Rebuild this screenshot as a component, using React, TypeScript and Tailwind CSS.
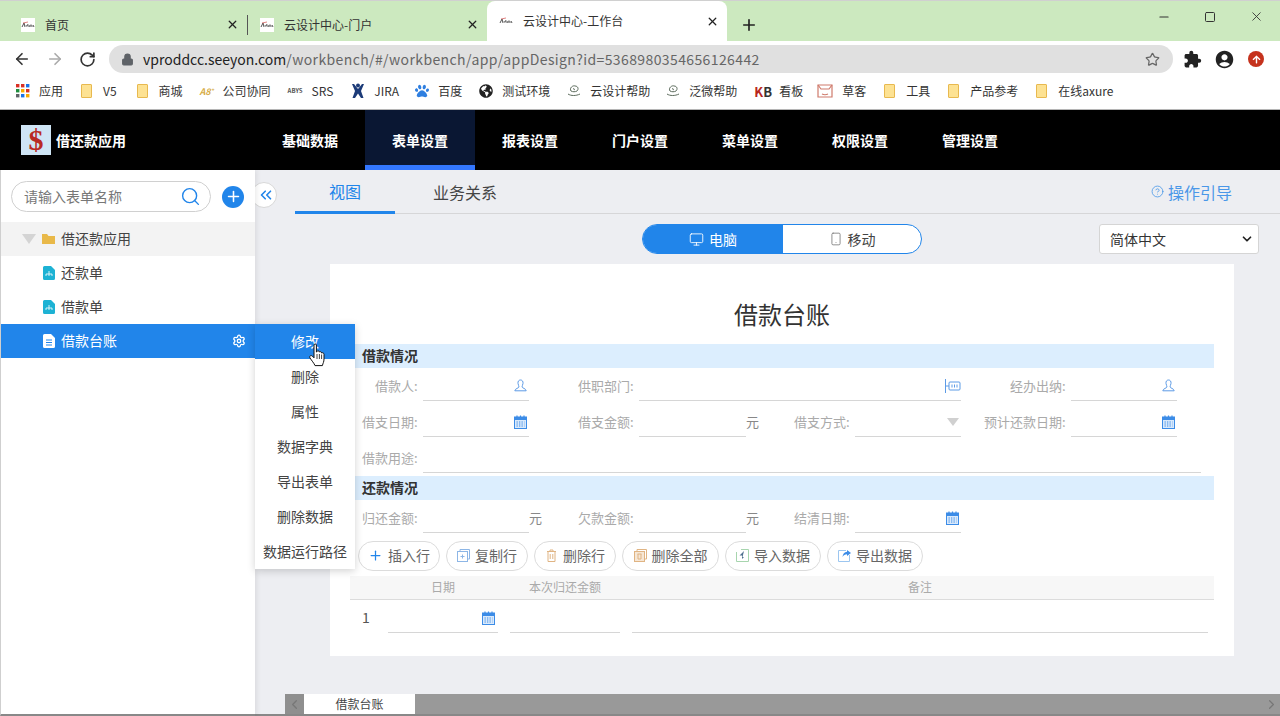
import React from 'react';
import { ArrowLeft, ArrowRight, RotateCw, X, Plus, Minus, Square, Star, Lock, Search, Monitor, Smartphone, Settings, ChevronsLeft, ChevronDown, ChevronLeft, ChevronRight, CircleHelp } from 'lucide-react';
import { FaGlobeAmericas, FaPaw, FaArrowUp } from 'react-icons/fa';
import { MdAccountCircle, MdExtension } from 'react-icons/md';

const FONT = "font-['Noto_Sans_CJK_SC','Noto_Sans',sans-serif]";

const Favicon = () => (
  <svg width="14" height="14" viewBox="0 0 14 14" className="bg-white shrink-0">
    <path d="M1 9 L3 5 L4 9 M5 7 C6 9 6 9 7 6 M8 7 L8 9 M9 9 C9 6 11 6 11 9 M12 7 L13 9" fill="none" stroke="#555" strokeWidth="1" />
    <path d="M2 5 L7 4" stroke="#c33" strokeWidth="0.6" />
  </svg>
);

const Folder = () => (
  <span className="w-[13px] flex shrink-0">
    <span className="w-[11px] h-[14px] bg-[#fde293] border border-[#e8b94f] rounded-[1px]" />
  </span>
);

const AppsGrid = () => (
  <svg width="14" height="14" viewBox="0 0 14 14" className="shrink-0">
    {[
      ['#d93025', 0, 0], ['#d93025', 5, 0], ['#1a73e8', 10, 0],
      ['#1e8e3e', 0, 5], ['#f9ab00', 5, 5], ['#d93025', 10, 5],
      ['#5f6368', 0, 10], ['#1a73e8', 5, 10], ['#f9ab00', 10, 10],
    ].map(([c, x, y], i) => (
      <rect key={i} x={x as number} y={y as number} width="3.4" height="3.4" fill={c as string} />
    ))}
  </svg>
);

const CloudMark = () => (
  <svg width="14" height="14" viewBox="0 0 14 14" fill="none" stroke="#5c6b5c" strokeWidth="1" className="shrink-0">
    <path d="M4 7 C2 4 6 1 8 2 C11 2 12 5 10 7 C8 8 6 8 4 7 Z" />
    <path d="M7 4 C6 5 7 6 8 5.5" />
    <path d="M1 10 C4 12 9 12 13 10" />
  </svg>
);

const JiraMark = () => (
  <svg width="14" height="16" viewBox="0 0 14 16" className="shrink-0">
    <circle cx="7" cy="2.4" r="2" fill="#1c3b78" />
    <path d="M1 1 L3 1 L7 6 L11 1 L13 1 L10 8 L12.5 15 L10 15 L7 10.5 L4 15 L1.5 15 L4 8 Z" fill="#1c3b78" />
  </svg>
);

const MailMark = () => (
  <svg width="16" height="14" viewBox="0 0 16 14" fill="none" stroke="#cf7b6c" strokeWidth="1.2" className="shrink-0">
    <path d="M1 1 H15 V13 H1 Z" />
    <path d="M1 1 L4 5 H12 L15 1" />
    <path d="M5 10 C7 11 9 11 11 10" />
  </svg>
);

const bookmarks: { icon: React.ReactNode; label: string; ml?: string }[] = [
  { icon: <AppsGrid />, label: '应用' },
  { icon: <Folder />, label: 'V5' },
  { icon: <Folder />, label: '商城', ml: 'ml-[2px]' },
  { icon: <span className="w-[14px] text-[9px] leading-none italic font-bold text-[#d6ac45] shrink-0">A8⁺</span>, label: '公司协同', ml: '-ml-[1px]' },
  { icon: <span className="w-[15px] text-[6px] leading-none font-bold text-[#555] shrink-0">ABYS</span>, label: 'SRS', ml: '-ml-[1px]' },
  { icon: <JiraMark />, label: 'JIRA' },
  { icon: <FaPaw className="w-[14px] h-[14px] text-[#2f7fe0] shrink-0" />, label: '百度', ml: '-ml-[2px]' },
  { icon: <FaGlobeAmericas className="w-[14px] h-[14px] text-[#222] shrink-0" />, label: '测试环境', ml: '-ml-[1px]' },
  { icon: <CloudMark />, label: '云设计帮助', ml: '-ml-[1px]' },
  { icon: <CloudMark />, label: '泛微帮助', ml: '-ml-[2px]' },
  { icon: <span className="w-[16px] text-[13px] leading-none font-bold shrink-0 text-[#b8261c]">K<span className="text-[#333]">B</span></span>, label: '看板', ml: '-ml-[1px]' },
  { icon: <MailMark />, label: '草客', ml: '-ml-[4px]' },
  { icon: <Folder />, label: '工具' },
  { icon: <Folder />, label: '产品参考' },
  { icon: <Folder />, label: '在线axure' },
];

const navItems = ['基础数据', '表单设置', '报表设置', '门户设置', '菜单设置', '权限设置', '管理设置'];
const menuItems = ['修改', '删除', '属性', '数据字典', '导出表单', '删除数据', '数据运行路径'];

const BrowserTab = ({ title, active, width }: { title: string; active?: boolean; width: string }) => (
  <div className={`h-full flex items-center pr-[8px] ${width} ${active ? 'pl-[12px] bg-white rounded-t-[8px]' : 'pl-[13px]'}`}>
    <Favicon />
    <span className="ml-[10px] text-[12px] text-[#333] flex-1">{title}</span>
    <X size={13} strokeWidth={2.4} className="text-[#222]" />
  </div>
);

const FileIcon = ({ lines }: { lines?: boolean }) => (
  <svg width="12" height="14" viewBox="0 0 12 14" className="shrink-0">
    <path d="M1.5 0 H8 L12 4 V12.5 A1.5 1.5 0 0 1 10.5 14 H1.5 A1.5 1.5 0 0 1 0 12.5 V1.5 A1.5 1.5 0 0 1 1.5 0 Z" fill={lines ? '#ffffff' : '#1db2d4'} />
    {lines ? (
      <path d="M3 6 H9 M3 8.5 H9 M3 11 H9" stroke="#2185ea" strokeWidth="1" />
    ) : (
      <path d="M6 5 V8 M3 8 H9 M3 8 V10 M6 8 V10 M9 8 V10" stroke="#ffffff" strokeWidth="0.8" fill="none" />
    )}
  </svg>
);

const Calendar = () => (
  <svg width="13" height="14" viewBox="0 0 13 14" className="shrink-0">
    <rect x="0.5" y="2" width="12" height="11.5" fill="#d9e9fb" stroke="#3c8ce7" />
    <rect x="0" y="2" width="13" height="3" fill="#3c8ce7" />
    <path d="M3 0.5 V3 M6.5 0.5 V3 M10 0.5 V3" stroke="#3c8ce7" strokeWidth="1.2" />
    <path d="M2.5 7 H10.5 M2.5 9 H10.5 M2.5 11 H10.5" stroke="#3c8ce7" strokeWidth="1" strokeDasharray="1.3 1.2" />
  </svg>
);

const UserIcon = () => (
  <svg width="13" height="13" viewBox="0 0 13 13" fill="none" stroke="#5d9be6" strokeWidth="1" className="shrink-0">
    <path d="M6.5 1 C4.5 1 3.8 2.6 4 4.4 C4.2 6 5 7 5 8 C5 9 1 9.5 0.8 11.8 H12.2 C12 9.5 8 9 8 8 C8 7 8.8 6 9 4.4 C9.2 2.6 8.5 1 6.5 1 Z" />
  </svg>
);

const OrgIcon = () => (
  <svg width="16" height="14" viewBox="0 0 16 14" fill="none" stroke="#5d9be6" strokeWidth="1" className="shrink-0">
    <path d="M0.5 0 V14 M0.5 7 H4" />
    <rect x="4" y="3" width="11" height="8" rx="1" />
    <path d="M7 5.5 V8.5 M9.5 5.5 V8.5 M12 5.5 V8.5" />
  </svg>
);

const Field = ({ icon, span, className = '' }: { icon?: React.ReactNode; span?: string; className?: string }) => (
  <div className={`h-[30px] border-b border-[#d6d6d6] flex items-center justify-end ${span ?? ''} ${className}`}>{icon}</div>
);

const Label = ({ text, unit }: { text?: string; unit?: boolean }) => (
  <div className="h-[30px] flex items-center text-[13px] text-[#aaaaaa] pr-[7px]">
    {unit && <span className="text-[#888]">元</span>}
    {text && (
      <span className="ml-auto">
        {text}
        <span className="inline-block w-[2px]">:</span>
      </span>
    )}
  </div>
);

const Band = ({ text }: { text: string }) => (
  <div className="h-[24px] bg-[#dceefe] pl-[12px] pb-px flex items-center text-[14px] font-bold text-[#333]">{text}</div>
);

const toolButtons: { label: string; icon: React.ReactNode; w: string }[] = [
  { label: '插入行', w: 'w-[82px]', icon: <Plus size={15} className="text-[#2185ea]" /> },
  {
    label: '复制行', w: 'w-[82px]',
    icon: (
      <svg width="13" height="13" viewBox="0 0 13 13" fill="none" stroke="#8db6e6">
        <path d="M3 2.5 V0.5 H12.5 V10 H10.5" /><rect x="0.5" y="2.5" width="10" height="10" />
        <path d="M3.5 7.5 H7.5 M5.5 5.5 V9.5" />
      </svg>
    ),
  },
  {
    label: '删除行', w: 'w-[82px]',
    icon: (
      <svg width="13" height="13" viewBox="0 0 13 13" fill="none" stroke="#e0b483">
        <path d="M2 2.5 H11 M5 2.5 V1 H8 V2.5 M3 2.5 V12.5 H10 V2.5 M5.2 5 V10 M7.8 5 V10" />
      </svg>
    ),
  },
  {
    label: '删除全部', w: 'w-[97px]',
    icon: (
      <svg width="13" height="13" viewBox="0 0 13 13" fill="none" stroke="#e0b483">
        <path d="M3 2.5 V0.5 H12.5 V10 H10.5" /><rect x="0.5" y="2.5" width="10" height="10" fill="#f6e7d6" />
        <path d="M3.5 5 H7.5 M4 5 V10 H7 V5" />
      </svg>
    ),
  },
  {
    label: '导入数据', w: 'w-[96px]',
    icon: (
      <svg width="13" height="13" viewBox="0 0 13 13" fill="none">
        <path d="M5 0.5 H12.5 V12.5 H0.5 V3" stroke="#a7d5ae" />
        <path d="M8 2 L3.5 6.5 H6 V10 L8 8 H10 H6.5 Z" fill="#4e6f8f" />
      </svg>
    ),
  },
  {
    label: '导出数据', w: 'w-[96px]',
    icon: (
      <svg width="13" height="13" viewBox="0 0 13 13" fill="none">
        <path d="M8 1.5 H0.5 V12.5 H11.5 V6" stroke="#9cc6f0" />
        <path d="M9 1 L13 4 L9 7 V5.2 C7 5.2 5.5 6 4.5 8 C4.7 5 6.5 3 9 2.8 Z" fill="#3c8ce7" />
      </svg>
    ),
  },
];

const HandCursor = () => (
  <svg width="18" height="24" viewBox="0 0 18 24" className="absolute left-[308px] top-[343px] z-30">
    <path
      d="M6 2 C6 0.6 8.4 0.6 8.4 2 V9 L9 8.6 C9.4 7.4 11.2 7.6 11.4 9 C12 8.2 13.4 8.6 13.6 10 C14.4 9.4 16 9.8 16 11.4 V16 C16 19 15 20 14.4 22.6 H7 C6 20 3.6 17.6 2 15 C1 13 3 11.8 4.4 13.2 L6 14.8 Z"
      fill="#ffffff"
      stroke="#111111"
      strokeWidth="1"
    />
    <path d="M9 11 V16 M11.4 11 V16 M13.6 11.5 V16" stroke="#111111" strokeWidth="0.8" />
  </svg>
);

export default function App() {
  return (
    <div className={`w-[1280px] h-[716px] overflow-hidden relative flex flex-col bg-white ${FONT}`}>
      {/* browser chrome */}
      <div className="h-[41px] shrink-0 bg-[#cce9bf] border-t border-[#d0d0d0] flex items-end">
        <div className="h-[33px] pl-[8px] flex items-center">
          <BrowserTab title="首页" width="w-[239px]" />
          <div className="w-px h-[20px] bg-[#555]" />
        </div>
        <div className="h-[33px] flex items-center -ml-px">
          <BrowserTab title="云设计中心-门户" width="w-[240px]" />
        </div>
        <BrowserTab title="云设计中心-工作台" width="w-[240px]" active />
        <div className="h-[33px] flex items-center ml-[13px]">
          <Plus size={18} strokeWidth={2.2} className="text-[#222]" />
        </div>
        <div className="ml-auto self-start flex items-center gap-[33px] pr-[16px] pt-[8px] text-[#333]">
          <Minus size={14} />
          <Square size={12} />
          <X size={15} strokeWidth={1.4} />
        </div>
      </div>
      <div className="h-[36px] shrink-0 bg-white flex items-center">
        <div className="w-[109px] flex items-center pl-[13px] gap-[15px]">
          <ArrowLeft size={18} strokeWidth={2.2} className="text-[#333]" />
          <ArrowRight size={18} strokeWidth={2.2} className="text-[#aaaaaa]" />
          <RotateCw size={17} strokeWidth={2.4} className="text-[#333]" />
        </div>
        <div className="w-[1064px] h-[28px] rounded-full bg-[#e0e0e0] flex items-center pl-[12px] pr-[13px]">
          <Lock size={13} fill="#5f6368" className="text-[#5f6368]" />
          <span className="ml-[9px] text-[14px] text-[#666]">
            <span className="text-[#222]">vproddcc.seeyon.com</span>
            <span className="tracking-[0.39px]">/workbench/#/workbench/app/appDesign?id=5368980354656126442</span>
          </span>
          <Star size={15} className="ml-auto text-[#666]" />
        </div>
        <div className="flex-1 flex items-center pl-[10px] gap-[12px]">
          <MdExtension className="w-[19px] h-[19px] text-[#222]" />
          <MdAccountCircle className="w-[21px] h-[21px] text-[#222]" />
          <span className="w-[16px] h-[16px] ml-[1px] rounded-full bg-[#c5321d] flex items-center justify-center">
            <FaArrowUp className="w-[9px] h-[9px] text-white" />
          </span>
        </div>
      </div>
      <div className="h-[33px] shrink-0 bg-white border-b border-[#b5b5b5] flex items-center pl-[16px] pb-[4px] gap-[18px]">
        {bookmarks.map((b, i) => (
          <div key={i} className={`flex items-center gap-[9px] text-[12px] text-[#333] ${b.ml ?? ''}`}>
            {b.icon}
            <span>{b.label}</span>
          </div>
        ))}
      </div>

      {/* app header */}
      <div className="h-[60px] shrink-0 bg-black flex text-white">
        <div className="w-[255px] flex items-center pl-[21px]">
          <div className="w-[30px] h-[30px] bg-[#cfe5f5] flex items-center justify-center text-[30px] leading-none font-bold text-[#b92a24] font-['Liberation_Serif',serif]">$</div>
          <span className="ml-[5px] text-[14px] font-bold">借还款应用</span>
        </div>
        {navItems.map((n, i) => (
          <div key={n} className={`w-[110px] flex items-center justify-center text-[14px] font-bold ${i === 1 ? 'bg-[#0a1733] border-b-[5px] border-[#3377ff] pt-[5px]' : ''}`}>
            {n}
          </div>
        ))}
      </div>

      <div className="flex-1 flex min-h-0">
        {/* sidebar */}
        <div className="w-[255px] shrink-0 bg-white border-l border-b-2 border-l-[#cfcfcf] border-b-[#888] shadow-[2px_0_5px_rgba(0,0,0,0.08)] z-10">
          <div className="flex items-center pl-[10px] pt-[11px]">
            <div className="w-[200px] h-[31px] rounded-full border border-[#d0d0d0] flex items-center pl-[12px] pr-[9px] text-[14px] text-[#777]">
              <span className="flex-1">请输入表单名称</span>
              <Search size={21} strokeWidth={1.6} className="text-[#2185ea]" />
            </div>
            <div className="ml-[11px] w-[22px] h-[22px] rounded-full bg-[#2185ea] flex items-center justify-center">
              <Plus size={17} strokeWidth={2.2} className="text-white" />
            </div>
          </div>
          <div className="mt-[10px] text-[14px] text-[#444]">
            <div className="h-[34px] bg-[#f3f3f3] flex items-center pl-[21px] pb-px">
              <span className="w-0 h-0 border-l-[7px] border-r-[7px] border-t-[10px] border-l-transparent border-r-transparent border-t-[#d4d4d4]" />
              <svg width="13" height="11" viewBox="0 0 13 11" className="ml-[6px]">
                <path d="M0 1 H5 L6.5 3 H13 V11 H0 Z" fill="#e9b949" />
              </svg>
              <span className="ml-[6px]">借还款应用</span>
            </div>
            {['还款单', '借款单'].map(t => (
              <div key={t} className="h-[34px] flex items-center pl-[42px] pb-px">
                <FileIcon />
                <span className="ml-[6px]">{t}</span>
              </div>
            ))}
            <div className="h-[34px] bg-[#2185ea] text-white flex items-center pl-[42px] pr-[9px] pb-px">
              <FileIcon lines />
              <span className="ml-[6px] flex-1">借款台账</span>
              <Settings size={14} strokeWidth={2.2} />
            </div>
          </div>
        </div>

        {/* main */}
        <div className="flex-1 bg-[#edeef2] flex flex-col min-w-0">
          <div className="h-[44px] shrink-0 ml-[40px] border-b border-[#d6d6d8] flex text-[#444] text-[16px]">
            <div className="w-[100px] h-[44px] border-b-[3px] border-[#2185ea] text-[#2185ea] flex items-center justify-center">视图</div>
            <div className="w-[140px] h-[43px] flex items-center justify-center">业务关系</div>
            <div className="ml-auto h-[43px] flex items-center pr-[48px] text-[#4a97e8]">
              <CircleHelp size={13} strokeWidth={1.5} className="mr-[4px]" />
              操作引导
            </div>
          </div>
          <div className="h-[50px] shrink-0 flex items-start pt-[10px] pl-[387px]">
            <div className="w-[280px] h-[30px] rounded-full border border-[#2185ea] bg-white flex overflow-hidden text-[14px]">
              <div className="w-[140px] bg-[#2185ea] text-white flex items-center justify-center gap-[5px]">
                <Monitor size={15} strokeWidth={1.4} />
                电脑
              </div>
              <div className="flex-1 text-[#444] flex items-center justify-center gap-[5px]">
                <Smartphone size={14} strokeWidth={1.4} className="text-[#777]" />
                移动
              </div>
            </div>
            <div className="ml-[177px] w-[160px] h-[30px] bg-white border border-[#d5d5d5] rounded-[3px] flex items-center justify-between pl-[10px] pr-[4px] text-[14px] text-[#333]">
              简体中文
              <ChevronDown size={14} strokeWidth={3} className="text-[#222]" />
            </div>
          </div>

          {/* form sheet */}
          <div className="ml-[75px] w-[904px] h-[392px] shrink-0 bg-white px-[20px]">
            <div className="h-[80px] flex items-center justify-center pt-[20px] text-[24px] text-[#333]">借款台账</div>
            <Band text="借款情况" />
            <div className="grid grid-cols-[73px_106px_110px_107px_109px_106px_110px_106px_37px] items-end grid-rows-[33px_36px_36px]">
              <Label text="借款人" />
              <Field icon={<UserIcon />} className="pr-[2px]" />
              <Label text="供职部门" />
              <Field icon={<OrgIcon />} span="col-span-3" />
              <Label text="经办出纳" />
              <Field icon={<UserIcon />} className="pr-[2px]" />
              <div />

              <Label text="借支日期" />
              <Field icon={<Calendar />} className="pr-[2px]" />
              <Label text="借支金额" />
              <Field />
              <Label unit text="借支方式" />
              <Field
                className="pr-[2px]"
                icon={<span className="w-0 h-0 border-l-[6px] border-r-[6px] border-t-[8px] border-l-transparent border-r-transparent border-t-[#d0d0d0]" />}
              />
              <Label text="预计还款日期" />
              <Field icon={<Calendar />} className="pr-[2px]" />
              <div />

              <Label text="借款用途" />
              <Field span="col-span-8 mr-[13px]" />
            </div>
            <div className="mt-[3px]">
              <Band text="还款情况" />
            </div>
            <div className="grid grid-cols-[73px_106px_110px_107px_109px_106px] items-end grid-rows-[33px]">
              <Label text="归还金额" />
              <Field />
              <Label unit text="欠款金额" />
              <Field />
              <Label unit text="结清日期" />
              <Field icon={<Calendar />} className="pr-[2px]" />
            </div>
            <div className="mt-[8px] ml-[8px] flex gap-[6px]">
              {toolButtons.map(b => (
                <div key={b.label} className={`${b.w} h-[30px] rounded-full border border-[#dcdcdc] pb-px flex items-center justify-center gap-[5px] text-[14px] text-[#666]`}>
                  {b.icon}
                  {b.label}
                </div>
              ))}
            </div>
            <div className="mt-[5px] h-[24px] bg-[#f7f7f7] border-b border-[#dcdcdc] pb-px flex items-center text-[12px] text-[#aaaaaa] text-center">
              <div className="w-[38px]" />
              <div className="w-[110px]">日期</div>
              <div className="w-[110px] ml-[12px]">本次归还金额</div>
              <div className="w-[576px] ml-[12px]">备注</div>
            </div>
            <div className="h-[33px] flex items-end">
              <div className="w-[38px] h-[30px] pl-[12px] pb-[2px] flex items-center text-[14px] text-[#555]">1</div>
              <Field icon={<Calendar />} className="w-[110px] pr-[3px]" />
              <Field className="w-[110px] ml-[12px]" />
              <Field className="w-[576px] ml-[12px]" />
            </div>
          </div>

          {/* sheet tabs */}
          <div className="mt-[38px] ml-[30px] h-[20px] shrink-0 bg-[#999999] flex items-center text-[12px] text-[#444]">
            <div className="w-[19px] h-full bg-[#8f8f8f] flex items-center justify-center">
              <ChevronLeft size={15} className="text-[#777]" />
            </div>
            <div className="w-[111px] h-full bg-white flex items-center justify-center">借款台账</div>
            <div className="ml-auto w-[18px] flex justify-center">
              <ChevronRight size={15} className="text-[#777]" />
            </div>
          </div>
          <div className="h-[2px] bg-[#888] shrink-0" />
        </div>
      </div>

      {/* collapse handle, half hidden behind the sidebar */}
      <div className="absolute left-[251px] top-[182px] w-[26px] h-[26px] rounded-full bg-white border border-[#d8d8d8] z-[5] flex items-center justify-end pr-[1px]">
        <ChevronsLeft size={18} strokeWidth={2.2} className="text-[#2185ea]" />
      </div>

      {/* context menu */}
      <div className="absolute left-[255px] top-[324px] w-[100px] bg-white shadow-[0_2px_8px_rgba(0,0,0,0.18)] z-20 text-[14px] text-[#444]">
        {menuItems.map((m, i) => (
          <div key={m} className={`h-[35px] flex items-center justify-center pb-px ${i === 0 ? 'bg-[#2185ea] text-white' : ''}`}>{m}</div>
        ))}
      </div>
      <HandCursor />
    </div>
  );
}
